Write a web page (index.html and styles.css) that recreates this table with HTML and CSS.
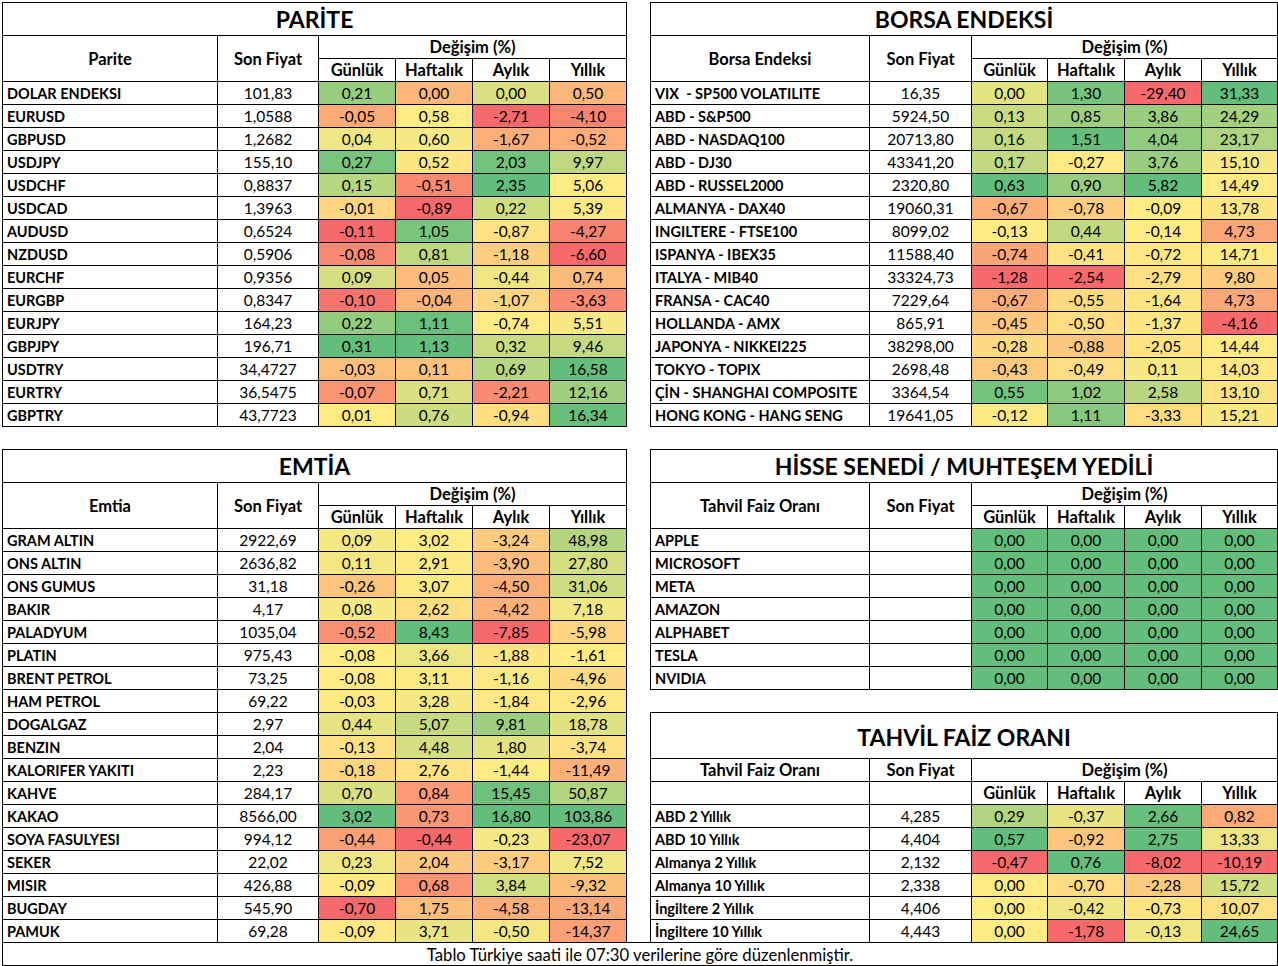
FILE: index.html
```html
<!DOCTYPE html>
<html lang="tr">
<head>
<meta charset="utf-8">
<title>Piyasa Tablosu</title>
<link rel="stylesheet" href="styles.css">
</head>
<body>
<div class="sheet">
  <div class="grid">
    <table class="t left">
      <colgroup><col class="cn"><col class="cp"><col class="cv"><col class="cv"><col class="cv"><col class="cv"></colgroup>
      <thead>
        <tr class="ttl"><th colspan="6">PARİTE</th></tr>
        <tr><th rowspan="2">Parite</th><th rowspan="2">Son Fiyat</th><th colspan="4">Değişim (%)</th></tr>
        <tr><th>Günlük</th><th>Haftalık</th><th>Aylık</th><th>Yıllık</th></tr>
      </thead>
      <tbody>
        <tr><th>DOLAR ENDEKSI</th><td>101,83</td><td>0,21</td><td>0,00</td><td>0,00</td><td>0,50</td></tr>
        <tr><th>EURUSD</th><td>1,0588</td><td>-0,05</td><td>0,58</td><td>-2,71</td><td>-4,10</td></tr>
        <tr><th>GBPUSD</th><td>1,2682</td><td>0,04</td><td>0,60</td><td>-1,67</td><td>-0,52</td></tr>
        <tr><th>USDJPY</th><td>155,10</td><td>0,27</td><td>0,52</td><td>2,03</td><td>9,97</td></tr>
        <tr><th>USDCHF</th><td>0,8837</td><td>0,15</td><td>-0,51</td><td>2,35</td><td>5,06</td></tr>
        <tr><th>USDCAD</th><td>1,3963</td><td>-0,01</td><td>-0,89</td><td>0,22</td><td>5,39</td></tr>
        <tr><th>AUDUSD</th><td>0,6524</td><td>-0,11</td><td>1,05</td><td>-0,87</td><td>-4,27</td></tr>
        <tr><th>NZDUSD</th><td>0,5906</td><td>-0,08</td><td>0,81</td><td>-1,18</td><td>-6,60</td></tr>
        <tr><th>EURCHF</th><td>0,9356</td><td>0,09</td><td>0,05</td><td>-0,44</td><td>0,74</td></tr>
        <tr><th>EURGBP</th><td>0,8347</td><td>-0,10</td><td>-0,04</td><td>-1,07</td><td>-3,63</td></tr>
        <tr><th>EURJPY</th><td>164,23</td><td>0,22</td><td>1,11</td><td>-0,74</td><td>5,51</td></tr>
        <tr><th>GBPJPY</th><td>196,71</td><td>0,31</td><td>1,13</td><td>0,32</td><td>9,46</td></tr>
        <tr><th>USDTRY</th><td>34,4727</td><td>-0,03</td><td>0,11</td><td>0,69</td><td>16,58</td></tr>
        <tr><th>EURTRY</th><td>36,5475</td><td>-0,07</td><td>0,71</td><td>-2,21</td><td>12,16</td></tr>
        <tr><th>GBPTRY</th><td>43,7723</td><td>0,01</td><td>0,76</td><td>-0,94</td><td>16,34</td></tr>
      </tbody>
    </table>

    <table class="t right">
      <colgroup><col class="cn"><col class="cp"><col class="c1"><col class="c2"><col class="c2"><col class="c1"></colgroup>
      <thead>
        <tr class="ttl"><th colspan="6">BORSA ENDEKSİ</th></tr>
        <tr><th rowspan="2">Borsa Endeksi</th><th rowspan="2">Son Fiyat</th><th colspan="4">Değişim (%)</th></tr>
        <tr><th>Günlük</th><th>Haftalık</th><th>Aylık</th><th>Yıllık</th></tr>
      </thead>
      <tbody>
        <tr><th>VIX &nbsp;- SP500 VOLATILITE</th><td>16,35</td><td>0,00</td><td>1,30</td><td>-29,40</td><td>31,33</td></tr>
        <tr><th>ABD - S&amp;P500</th><td>5924,50</td><td>0,13</td><td>0,85</td><td>3,86</td><td>24,29</td></tr>
        <tr><th>ABD - NASDAQ100</th><td>20713,80</td><td>0,16</td><td>1,51</td><td>4,04</td><td>23,17</td></tr>
        <tr><th>ABD - DJ30</th><td>43341,20</td><td>0,17</td><td>-0,27</td><td>3,76</td><td>15,10</td></tr>
        <tr><th>ABD - RUSSEL2000</th><td>2320,80</td><td>0,63</td><td>0,90</td><td>5,82</td><td>14,49</td></tr>
        <tr><th>ALMANYA - DAX40</th><td>19060,31</td><td>-0,67</td><td>-0,78</td><td>-0,09</td><td>13,78</td></tr>
        <tr><th>INGILTERE - FTSE100</th><td>8099,02</td><td>-0,13</td><td>0,44</td><td>-0,14</td><td>4,73</td></tr>
        <tr><th>ISPANYA - IBEX35</th><td>11588,40</td><td>-0,74</td><td>-0,41</td><td>-0,72</td><td>14,71</td></tr>
        <tr><th>ITALYA - MIB40</th><td>33324,73</td><td>-1,28</td><td>-2,54</td><td>-2,79</td><td>9,80</td></tr>
        <tr><th>FRANSA - CAC40</th><td>7229,64</td><td>-0,67</td><td>-0,55</td><td>-1,64</td><td>4,73</td></tr>
        <tr><th>HOLLANDA - AMX</th><td>865,91</td><td>-0,45</td><td>-0,50</td><td>-1,37</td><td>-4,16</td></tr>
        <tr><th>JAPONYA - NIKKEI225</th><td>38298,00</td><td>-0,28</td><td>-0,88</td><td>-2,05</td><td>14,44</td></tr>
        <tr><th>TOKYO - TOPIX</th><td>2698,48</td><td>-0,43</td><td>-0,49</td><td>0,11</td><td>14,03</td></tr>
        <tr><th>ÇİN - SHANGHAI COMPOSITE</th><td>3364,54</td><td>0,55</td><td>1,02</td><td>2,58</td><td>13,10</td></tr>
        <tr><th>HONG KONG - HANG SENG</th><td>19641,05</td><td>-0,12</td><td>1,11</td><td>-3,33</td><td>15,21</td></tr>
      </tbody>
    </table>

    <table class="t left">
      <colgroup><col class="cn"><col class="cp"><col class="cv"><col class="cv"><col class="cv"><col class="cv"></colgroup>
      <thead>
        <tr class="ttl"><th colspan="6">EMTİA</th></tr>
        <tr><th rowspan="2">Emtia</th><th rowspan="2">Son Fiyat</th><th colspan="4">Değişim (%)</th></tr>
        <tr><th>Günlük</th><th>Haftalık</th><th>Aylık</th><th>Yıllık</th></tr>
      </thead>
      <tbody>
        <tr><th>GRAM ALTIN</th><td>2922,69</td><td>0,09</td><td>3,02</td><td>-3,24</td><td>48,98</td></tr>
        <tr><th>ONS ALTIN</th><td>2636,82</td><td>0,11</td><td>2,91</td><td>-3,90</td><td>27,80</td></tr>
        <tr><th>ONS GUMUS</th><td>31,18</td><td>-0,26</td><td>3,07</td><td>-4,50</td><td>31,06</td></tr>
        <tr><th>BAKIR</th><td>4,17</td><td>0,08</td><td>2,62</td><td>-4,42</td><td>7,18</td></tr>
        <tr><th>PALADYUM</th><td>1035,04</td><td>-0,52</td><td>8,43</td><td>-7,85</td><td>-5,98</td></tr>
        <tr><th>PLATIN</th><td>975,43</td><td>-0,08</td><td>3,66</td><td>-1,88</td><td>-1,61</td></tr>
        <tr><th>BRENT PETROL</th><td>73,25</td><td>-0,08</td><td>3,11</td><td>-1,16</td><td>-4,96</td></tr>
        <tr><th>HAM PETROL</th><td>69,22</td><td>-0,03</td><td>3,28</td><td>-1,84</td><td>-2,96</td></tr>
        <tr><th>DOGALGAZ</th><td>2,97</td><td>0,44</td><td>5,07</td><td>9,81</td><td>18,78</td></tr>
        <tr><th>BENZIN</th><td>2,04</td><td>-0,13</td><td>4,48</td><td>1,80</td><td>-3,74</td></tr>
        <tr><th>KALORIFER YAKITI</th><td>2,23</td><td>-0,18</td><td>2,76</td><td>-1,44</td><td>-11,49</td></tr>
        <tr><th>KAHVE</th><td>284,17</td><td>0,70</td><td>0,84</td><td>15,45</td><td>50,87</td></tr>
        <tr><th>KAKAO</th><td>8566,00</td><td>3,02</td><td>0,73</td><td>16,80</td><td>103,86</td></tr>
        <tr><th>SOYA FASULYESI</th><td>994,12</td><td>-0,44</td><td>-0,44</td><td>-0,23</td><td>-23,07</td></tr>
        <tr><th>SEKER</th><td>22,02</td><td>0,23</td><td>2,04</td><td>-3,17</td><td>7,52</td></tr>
        <tr><th>MISIR</th><td>426,88</td><td>-0,09</td><td>0,68</td><td>3,84</td><td>-9,32</td></tr>
        <tr><th>BUGDAY</th><td>545,90</td><td>-0,70</td><td>1,75</td><td>-4,58</td><td>-13,14</td></tr>
        <tr><th>PAMUK</th><td>69,28</td><td>-0,09</td><td>3,71</td><td>-0,50</td><td>-14,37</td></tr>
      </tbody>
    </table>

    <div class="stack">
      <table class="t right">
        <colgroup><col class="cn"><col class="cp"><col class="c1"><col class="c2"><col class="c2"><col class="c1"></colgroup>
        <thead>
          <tr class="ttl"><th colspan="6">HİSSE SENEDİ / MUHTEŞEM YEDİLİ</th></tr>
          <tr><th rowspan="2">Tahvil Faiz Oranı</th><th rowspan="2">Son Fiyat</th><th colspan="4">Değişim (%)</th></tr>
          <tr><th>Günlük</th><th>Haftalık</th><th>Aylık</th><th>Yıllık</th></tr>
        </thead>
        <tbody>
          <tr><th>APPLE</th><td></td><td>0,00</td><td>0,00</td><td>0,00</td><td>0,00</td></tr>
          <tr><th>MICROSOFT</th><td></td><td>0,00</td><td>0,00</td><td>0,00</td><td>0,00</td></tr>
          <tr><th>META</th><td></td><td>0,00</td><td>0,00</td><td>0,00</td><td>0,00</td></tr>
          <tr><th>AMAZON</th><td></td><td>0,00</td><td>0,00</td><td>0,00</td><td>0,00</td></tr>
          <tr><th>ALPHABET</th><td></td><td>0,00</td><td>0,00</td><td>0,00</td><td>0,00</td></tr>
          <tr><th>TESLA</th><td></td><td>0,00</td><td>0,00</td><td>0,00</td><td>0,00</td></tr>
          <tr><th>NVIDIA</th><td></td><td>0,00</td><td>0,00</td><td>0,00</td><td>0,00</td></tr>
        </tbody>
      </table>

      <table class="t right">
        <colgroup><col class="cn"><col class="cp"><col class="c1"><col class="c2"><col class="c2"><col class="c1"></colgroup>
        <thead>
          <tr class="ttl tall"><th colspan="6">TAHVİL FAİZ ORANI</th></tr>
          <tr><th>Tahvil Faiz Oranı</th><th>Son Fiyat</th><th colspan="4">Değişim (%)</th></tr>
          <tr><th></th><th></th><th>Günlük</th><th>Haftalık</th><th>Aylık</th><th>Yıllık</th></tr>
        </thead>
        <tbody>
          <tr><th>ABD 2 Yıllık</th><td>4,285</td><td>0,29</td><td>-0,37</td><td>2,66</td><td>0,82</td></tr>
          <tr><th>ABD 10 Yıllık</th><td>4,404</td><td>0,57</td><td>-0,92</td><td>2,75</td><td>13,33</td></tr>
          <tr><th>Almanya 2 Yıllık</th><td>2,132</td><td>-0,47</td><td>0,76</td><td>-8,02</td><td>-10,19</td></tr>
          <tr><th>Almanya 10 Yıllık</th><td>2,338</td><td>0,00</td><td>-0,70</td><td>-2,28</td><td>15,72</td></tr>
          <tr><th>İngiltere 2 Yıllık</th><td>4,406</td><td>0,00</td><td>-0,42</td><td>-0,73</td><td>10,07</td></tr>
          <tr><th>İngiltere 10 Yıllık</th><td>4,443</td><td>0,00</td><td>-1,78</td><td>-0,13</td><td>24,65</td></tr>
        </tbody>
      </table>
    </div>
  </div>
  <div class="foot">Tablo Türkiye saati ile 07:30 verilerine göre düzenlenmiştir.</div>
</div>
<script src="scale.js"></script>
</body>
</html>
```

FILE: styles.css
```css
* { box-sizing: border-box; }
body {
  margin: 0;
  background: #fff;
  color: #000;
  font-family: Lato, "Open Sans", "Liberation Sans", sans-serif;
}
.sheet {
  padding: 2px 0 0 2px;
  width: 1278px;
}
.grid {
  display: grid;
  grid-template-columns: 625px 628px;
  column-gap: 23px;
  row-gap: 22px;
  align-items: start;
}
.stack {
  display: flex;
  flex-direction: column;
  gap: 22px;
}
.t {
  border-collapse: collapse;
  table-layout: fixed;
  width: 100%;
}
.t th, .t td {
  border: 1px solid #000;
  padding: 1px 0 0;
  height: 23px;
  font-size: 15.5px;
  font-weight: 400;
  text-align: center;
  white-space: nowrap;
  overflow: hidden;
  line-height: 1;
}
.t thead th {
  font-weight: 700;
  font-size: 16.5px;
  padding-top: 1px;
}
.t .ttl th {
  height: 33px;
  font-size: 23px;
  padding-top: 1px;
}
.t .tall th {
  height: 46px;
  padding-top: 3px;
}
.t tbody th {
  text-align: left;
  padding: 2px 0 0 4px;
  font-weight: 700;
  font-size: 14.5px;
}
.left .cn { width: 215px; }
.left .cp { width: 101px; }
.left .cv { width: 77px; }
.right .cn { width: 219px; }
.right .cp { width: 102px; }
.right .c1 { width: 76px; }
.right .c2 { width: 77px; }
.foot {
  margin-top: -1px;
  width: 1276px;
  height: 24px;
  border: 1px solid #000;
  padding-top: 2px;
  text-align: center;
  font-size: 16.7px;
  line-height: 20px;
}
```

FILE: scale.js
```js
(function () {
  var RED = [248, 105, 107], YEL = [255, 235, 132], GRN = [99, 190, 123];
  function mix(a, b, f) {
    return 'rgb(' + a.map(function (v, i) { return Math.round(v + (b[i] - v) * f); }).join(',') + ')';
  }
  document.querySelectorAll('table.t').forEach(function (t) {
    var rows = t.tBodies[0].rows;
    for (var c = 2; c <= 5; c++) {
      var vals = [];
      for (var r = 0; r < rows.length; r++) {
        vals.push(parseFloat(rows[r].cells[c].textContent.replace(',', '.')));
      }
      var s = vals.slice().sort(function (a, b) { return a - b; });
      var min = s[0], max = s[s.length - 1];
      var pos = 0.5 * (s.length - 1), lo = Math.floor(pos), hi = Math.ceil(pos);
      var mid = s[lo] + (s[hi] - s[lo]) * (pos - lo);
      for (r = 0; r < rows.length; r++) {
        var v = vals[r], col;
        if (max === min) col = mix(GRN, GRN, 0);
        else if (v >= mid) col = mix(YEL, GRN, max === mid ? 1 : (v - mid) / (max - mid));
        else col = mix(YEL, RED, (mid - v) / (mid - min));
        rows[r].cells[c].style.backgroundColor = col;
      }
    }
  });
})();
```
